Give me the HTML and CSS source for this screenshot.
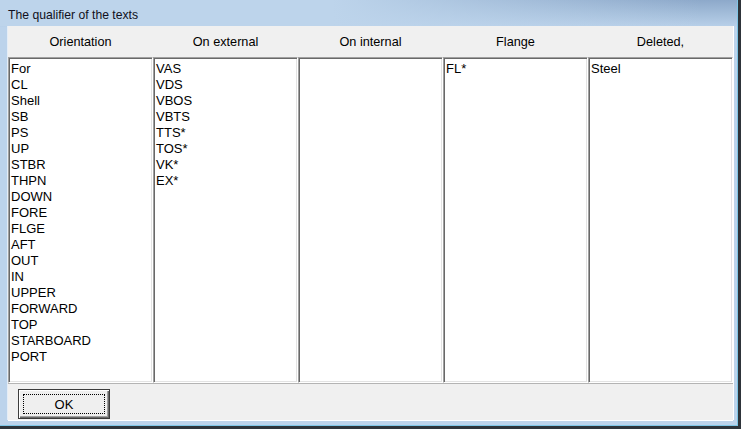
FILE: index.html
```html
<!DOCTYPE html>
<html>
<head>
<meta charset="utf-8">
<link rel="stylesheet" href="styles.css">
</head>
<body>
<div class="window">
  <div class="titlebar"><span class="title">The qualifier of the texts</span></div>
  <div class="client">
    <div class="headers">
      <div class="hcell">Orientation</div>
      <div class="hcell">On external</div>
      <div class="hcell">On internal</div>
      <div class="hcell">Flange</div>
      <div class="hcell">Deleted,</div>
    </div>
    <div class="lists">
      <div class="list">
        <div>For</div><div>CL</div><div>Shell</div><div>SB</div><div>PS</div><div>UP</div><div>STBR</div><div>THPN</div><div>DOWN</div><div>FORE</div><div>FLGE</div><div>AFT</div><div>OUT</div><div>IN</div><div>UPPER</div><div>FORWARD</div><div>TOP</div><div>STARBOARD</div><div>PORT</div>
      </div>
      <div class="list">
        <div>VAS</div><div>VDS</div><div>VBOS</div><div>VBTS</div><div>TTS*</div><div>TOS*</div><div>VK*</div><div>EX*</div>
      </div>
      <div class="list"></div>
      <div class="list">
        <div>FL*</div>
      </div>
      <div class="list">
        <div>Steel</div>
      </div>
    </div>
    <div class="panel">
      <button class="btn"><span class="focus">OK</span></button>
    </div>
  </div>
</div>
</body>
</html>
```
FILE: styles.css
```css
html, body {
  margin: 0;
  padding: 0;
}
body {
  width: 741px;
  height: 429px;
  overflow: hidden;
  background: #bcd3eb;
}
.window {
  box-sizing: border-box;
  width: 741px;
  height: 429px;
  display: flex;
  flex-direction: column;
  padding: 0 5px 6px 8px;
  border-right: 3px solid #2e343a;
  border-bottom: 3px solid #2e343a;
  box-shadow: inset -1px -1px #7fc6e6;
  background:
    linear-gradient(to right, #bdd4eb 0%, #bdd4eb 45%, rgba(189,212,235,0) 95%) top left / 100% 26px no-repeat,
    linear-gradient(#8da9ca, #b7cfe8 26px, #bcd3eb 27px);
}
.titlebar {
  height: 26px;
  display: flex;
  align-items: center;
  flex: none;
}
.title {
  font-family: "Liberation Sans", Arial, sans-serif;
  font-size: 12.2px;
  color: #101020;
  padding-top: 4px;
}
.client {
  flex: 1;
  display: flex;
  flex-direction: column;
  background: #f0f0f0;
  box-shadow: -1px 0 #e4edf7, 1px 0 #ffffff, 0 1px #ffffff;
}
.headers {
  height: 31px;
  display: flex;
  flex: none;
}
.hcell {
  flex: 1;
  display: flex;
  align-items: center;
  justify-content: center;
  font-family: "Liberation Sans", Arial, sans-serif;
  font-size: 12.7px;
  color: #000;
}
.lists {
  height: 326px;
  display: flex;
  flex: none;
}
.list {
  box-sizing: border-box;
  flex: 1;
  min-width: 0;
  background: #fff;
  border: 1px solid;
  border-color: #a0a0a0 #ffffff #ffffff #a0a0a0;
  box-shadow: inset 1px 1px #696969, inset -1px -1px #e3e3e3;
  padding: 3px 2px 1px 2px;
  font-family: "Liberation Sans", Arial, sans-serif;
  font-size: 13px;
  line-height: 16px;
  color: #000;
}
.panel {
  flex: 1;
  display: flex;
  align-items: flex-start;
  padding: 5px 0 0 10px;
  border-top: 1px solid #b4b4b4;
}
.btn {
  box-sizing: border-box;
  width: 92px;
  height: 30px;
  margin: 0;
  padding: 4px;
  background: #efefef;
  border: 1px solid #3c3c3c;
  border-radius: 0;
  box-shadow: inset 1px 1px #ffffff, inset -1px -1px #696969, inset -2px -2px #a0a0a0;
  display: flex;
  font-family: "Liberation Sans", Arial, sans-serif;
  font-size: 13px;
  color: #000;
}
.focus {
  flex: 1;
  display: flex;
  align-items: center;
  justify-content: center;
  border: 1px dotted #000;
}
```
